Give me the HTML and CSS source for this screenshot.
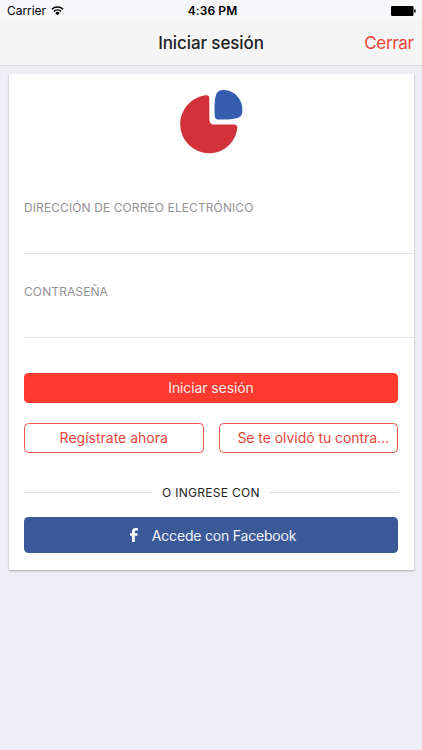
FILE: index.html
```html
<!DOCTYPE html>
<html lang="es">

<head>
    <meta charset="UTF-8">
    <meta name="viewport" content="width=device-width, initial-scale=1.0">
    <title>Iniciar sesión</title>
    <link rel="stylesheet" href="styles.css">
</head>

<body>

    <!-- Status bar -->
    <div class="status-bar">
        <div class="status-left">
            <span class="carrier">Carrier</span>
            <svg class="wifi" width="13" height="10" viewBox="0 0 13 10">
                <path d="M0.9 3.3a8.2 8.2 0 0 1 11.2 0M2.9 5.4a5.3 5.3 0 0 1 7.2 0" fill="none" stroke="#000" stroke-width="1.5" />
                <path d="M6.5 9.2L4.3 6.9a3.2 3.2 0 0 1 4.4 0z" />
            </svg>
        </div>
        <span class="clock">4:36 PM</span>
        <svg class="battery" width="25" height="10" viewBox="0 0 25 10">
            <rect x="0" y="0" width="22.5" height="10" rx="1.3" />
            <rect x="23.2" y="3.3" width="1.5" height="3.4" rx="0.7" />
        </svg>
    </div>

    <!-- Navigation -->
    <header class="nav-bar">
        <h1>Iniciar sesión</h1>
        <a class="close" href="#">Cerrar</a>
    </header>

    <main class="card">
        <svg class="logo" width="64" height="65" viewBox="0 0 64 65">
            <path d="M26.500 5.200Q29.300 5 29.300 8V29Q29.300 34.500 34 34.500H54Q57.600 34.500 57.300 38C55.500 53 43.500 63.300 29 63.300A28.800 28.800 0 0 1 0.200 34.500C0.200 19 12 6.500 26.500 5.200Z" fill="#d13239" />
            <path d="M34.700 25C34.300 16 34.500 9 36.200 4.500C37.500 0.800 40.500 -0.100 45 0C53 0.200 61 7.500 62.200 16.500C62.700 23 62.500 26.500 57.500 28C51 29.800 44 29.600 37.500 29.400Q34.800 29.300 34.700 25Z" fill="#355eb0" />
        </svg>

        <form class="login-form">
            <div class="field">
                <label for="email">DIRECCIÓN DE CORREO ELECTRÓNICO</label>
                <input type="email" id="email" name="email">
            </div>
            <div class="field">
                <label for="password">CONTRASEÑA</label>
                <input type="password" id="password" name="password">
            </div>

            <button class="btn btn-primary" type="submit">Iniciar sesión</button>
            <div class="btn-row">
                <button class="btn btn-outline" type="button">Regístrate ahora</button>
                <button class="btn btn-outline btn-forgot" type="button">Se te olvidó tu contra...</button>
            </div>

            <div class="divider"><span>O INGRESE CON</span></div>

            <button class="btn btn-facebook" type="button">
                <svg width="8" height="14" viewBox="0 0 8 14">
                    <path d="M2 14V7.800H0V5.200H2V3.500C2 1.300 3.300 0 5.500 0H7.800V2.500H6.100C5.100 2.500 4.800 3 4.800 3.800V5.200H7.700L7.300 7.800H4.800V14Z" fill="#fff" />
                </svg>
                <span>Accede con Facebook</span>
            </button>
        </form>
    </main>

</body>

</html>
```
FILE: styles.css
```css
* {
    box-sizing: border-box;
}

body {
    margin: 0;
    min-height: 100vh;
    background: #efeef5;
    font-family: Inter, "Liberation Sans", sans-serif;
    color: #222;
}

/* Status bar */
.status-bar {
    display: grid;
    grid-template-columns: 1fr auto 1fr;
    align-items: center;
    height: 21px;
    padding: 0 6px 0 7px;
    background: #f7f7fa;
    color: #000;
    font-size: 12px;
}

.status-left {
    display: flex;
    align-items: center;
    gap: 5px;
}

.carrier {
    letter-spacing: -0.05px;
}

.clock {
    padding-left: 2px;
    font-weight: 600;
    letter-spacing: 0.1px;
}

.battery {
    justify-self: end;
}

/* Navigation */
.nav-bar {
    display: grid;
    grid-template-columns: 1fr auto 1fr;
    align-items: center;
    height: 45px;
    padding: 0 8.5px;
    background: #f5f5f5;
    border-bottom: 1px solid #d9d9de;
}

.nav-bar h1 {
    grid-column: 2;
    margin: 0;
    font-size: 17px;
    font-weight: 500;
    letter-spacing: -0.1px;
}

.close {
    justify-self: end;
    font-size: 17px;
    letter-spacing: -0.35px;
    color: #f0443b;
    text-decoration: none;
}

/* Login card */
.card {
    width: 405px;
    height: 496px;
    margin: 8px 0 0 8.5px;
    padding-top: 16px;
    background: #fff;
    box-shadow: 0 1px 2px rgba(0, 0, 0, 0.3);
}

.logo {
    display: block;
    margin: 0 auto 0 171px;
}

.login-form {
    padding: 0 15.5px;
}

.field {
    height: 84px;
    margin-right: -15.5px;
    border-bottom: 1px solid #e4e4e6;
    padding-top: 30px;
}

.field:first-child {
    height: 99px;
    padding-top: 45px;
}

.field label {
    display: block;
    font-size: 12px;
    line-height: 16px;
    letter-spacing: 0.1px;
    color: #939396;
}

.field input {
    display: block;
    width: 100%;
    height: 30px;
    border: 0;
    padding: 0;
    background: none;
    outline: none;
}

/* Buttons */
.btn {
    display: flex;
    align-items: center;
    justify-content: center;
    width: 100%;
    height: 30px;
    padding: 0 0 2px;
    border: 0;
    border-radius: 4.5px;
    font-family: inherit;
    font-size: 14px;
    white-space: nowrap;
}

.btn-primary {
    margin-top: 35px;
    background: #ff3b30;
    color: #ffe5e3;
    letter-spacing: -0.1px;
}

.btn-row {
    display: grid;
    grid-template-columns: 1fr 1fr;
    gap: 15px;
    margin-top: 20px;
}

.btn-outline {
    background: #fff;
    border: 1px solid #e8564e;
    color: #e8453c;
}

.btn-forgot {
    padding-left: 10px;
    letter-spacing: -0.05px;
}

.divider {
    display: flex;
    align-items: center;
    gap: 10px;
    height: 16px;
    margin: 31px 0 17px;
    font-size: 12px;
    letter-spacing: 0.3px;
}

.divider::before,
.divider::after {
    content: "";
    flex: 1;
    height: 1px;
    background: #dcdcde;
}

.btn-facebook {
    gap: 14px;
    height: 36px;
    padding: 0 0 0 4px;
    background: #3b5998;
    color: #f1f4fa;
    letter-spacing: -0.2px;
}
```
